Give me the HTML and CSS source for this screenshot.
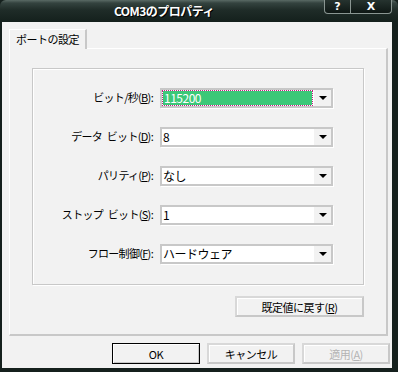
FILE: index.html
```html
<!DOCTYPE html>
<html lang="ja">
<head>
    <meta charset="UTF-8">
    <title>COM3のプロパティ</title>
    <link rel="stylesheet" href="styles.css">
</head>
<body>
    <div class="window">
        <div class="titlebar">
            <div class="title">COM3のプロパティ</div>
            <div class="title-buttons">
                <span class="tbtn help">?</span>
                <span class="tbtn close">X</span>
            </div>
        </div>

        <div class="client">
            <div class="tabs">
                <div class="tab">ポートの設定</div>
            </div>

            <div class="panel">
                <div class="group">
                    <div class="row">
                        <label>ビット/秒(<u>B</u>):</label>
                        <div class="combo focused">
                            <span class="value"><span class="sel">115200</span></span>
                            <span class="arrow"></span>
                        </div>
                    </div>
                    <div class="row">
                        <label>データ ビット(<u>D</u>):</label>
                        <div class="combo">
                            <span class="value">8</span>
                            <span class="arrow"></span>
                        </div>
                    </div>
                    <div class="row">
                        <label>パリティ(<u>P</u>):</label>
                        <div class="combo">
                            <span class="value">なし</span>
                            <span class="arrow"></span>
                        </div>
                    </div>
                    <div class="row">
                        <label>ストップ ビット(<u>S</u>):</label>
                        <div class="combo">
                            <span class="value">1</span>
                            <span class="arrow"></span>
                        </div>
                    </div>
                    <div class="row">
                        <label>フロー制御(<u>F</u>):</label>
                        <div class="combo">
                            <span class="value">ハードウェア</span>
                            <span class="arrow"></span>
                        </div>
                    </div>
                </div>

                <div class="reset-row">
                    <button class="btn reset">既定値に戻す(<u>R</u>)</button>
                </div>
            </div>

            <div class="footer">
                <button class="btn default">OK</button>
                <button class="btn">キャンセル</button>
                <button class="btn" disabled>適用(<u>A</u>)</button>
            </div>
        </div>
    </div>
</body>
</html>
```

FILE: styles.css
```css
body {
    margin: 0;
    padding: 0;
    background-color: #1a2522;
    font-family: "Noto Sans CJK JP", "Liberation Sans", sans-serif;
    font-size: 11px;
    line-height: 1.2;
    color: #000;
}

.window {
    width: 398px;
    height: 372px;
    background-color: #15201d;
    display: flex;
    flex-direction: column;
    overflow: hidden;
}

/* タイトルバー */
.titlebar {
    height: 22px;
    display: flex;
    align-items: flex-start;
    background: linear-gradient(#5a6a65 0px, #34433f 3px, #1f2c28 10px, #14201c 22px);
    border-radius: 6px 6px 0 0;
}

.title {
    flex: 1;
    text-align: center;
    color: #fff;
    font-weight: bold;
    font-size: 12px;
    line-height: 21px;
    letter-spacing: -0.5px;
    padding-left: 4px;
    text-shadow: 1px 1px 0 #000;
}

.title-buttons {
    display: flex;
    margin-right: 6px;
}

.tbtn {
    height: 13px;
    line-height: 13px;
    text-align: center;
    color: #fff;
    font-weight: bold;
    font-family: "DejaVu Sans", sans-serif;
    font-size: 11px;
    background: linear-gradient(#26332f, #0e1714);
    border: 1px solid #8a9692;
    border-top: none;
}

.help {
    width: 25px;
    border-radius: 0 0 0 4px;
}

.close {
    width: 40px;
    border-left: none;
    border-radius: 0 0 4px 0;
}

/* クライアント領域 */
.client {
    flex: 1;
    margin: 0 6px 4px 2px;
    background-color: #f2f2f2;
    padding: 7px 2px 0 7px;
    display: flex;
    flex-direction: column;
}

.tabs {
    display: flex;
    height: 19px;
}

.tab {
    width: 78px;
    padding-left: 6px;
    line-height: 19px;
    white-space: nowrap;
    letter-spacing: -0.5px;
    border-top: 1px solid #fff;
    border-left: 1px solid #fff;
    border-right: 2px solid #c8c8c8;
    box-sizing: border-box;
    margin-bottom: -1px;
    background-color: #f2f2f2;
    position: relative;
    z-index: 1;
}

.panel {
    width: 379px;
    height: 288px;
    box-sizing: border-box;
    border-top: 1px solid #fff;
    border-left: 1px solid #fff;
    border-right: 2px solid #c8c8c8;
    border-bottom: 2px solid #c8c8c8;
    padding: 19px 0 0 22px;
}

.group {
    width: 332px;
    height: 217px;
    box-sizing: border-box;
    border: 1px solid #c8c8c8;
    box-shadow: inset 1px 1px 0 #fff, 1px 1px 0 #fff;
    padding: 19px 0 0 0;
    display: flex;
    flex-direction: column;
    gap: 19px;
}

.row {
    display: flex;
    align-items: center;
    height: 20px;
}

.row label {
    width: 120px;
    text-align: right;
    padding-right: 7px;
    white-space: nowrap;
    letter-spacing: -0.7px;
    word-spacing: 3px;
}

.combo {
    width: 173px;
    height: 20px;
    box-sizing: border-box;
    background-color: #fff;
    border: 2px solid #c8c8c8;
    box-shadow: 1px 1px 0 #fff;
    display: flex;
    align-items: stretch;
}

.combo .value {
    flex: 1;
    font-size: 12px;
    line-height: 16px;
    padding-left: 1px;
    letter-spacing: -0.5px;
    display: flex;
}

.combo.focused .value {
    padding: 1px;
}

.sel {
    flex: 1;
    background-color: #3cc878;
    color: #fff;
    outline: 1px dotted #c02080;
    line-height: 14px;
    padding-left: 1px;
}

.arrow {
    width: 17px;
    background-color: #f2f2f2;
    border-left: 1px solid #fff;
    position: relative;
}

.arrow::after {
    content: "";
    position: absolute;
    left: 5px;
    top: 6px;
    border-left: 4px solid transparent;
    border-right: 4px solid transparent;
    border-top: 4px solid #000;
}

.reset-row {
    width: 332px;
    display: flex;
    justify-content: flex-end;
    margin-top: 11px;
}

/* ボタン */
.btn {
    font-family: "Noto Sans CJK JP", "Liberation Sans", sans-serif;
    font-size: 11px;
    letter-spacing: -0.5px;
    height: 21px;
    width: 88px;
    padding: 0;
    margin: 0;
    background-color: #f2f2f2;
    border: 2px solid #c8c8c8;
    border-left-color: #d8d8d8;
    border-top-color: #d8d8d8;
    box-shadow: inset 1px 1px 0 #fff;
    color: #000;
}

.btn.reset {
    width: 129px;
}

.btn.default {
    border: 1px solid #000;
    box-shadow: inset 1px 1px 0 #fff, inset -1px -1px 0 #c8c8c8;
}

.btn:disabled {
    color: #b4b4b4;
}

.footer {
    display: flex;
    justify-content: flex-end;
    gap: 7px;
    margin-top: 7px;
}
```
